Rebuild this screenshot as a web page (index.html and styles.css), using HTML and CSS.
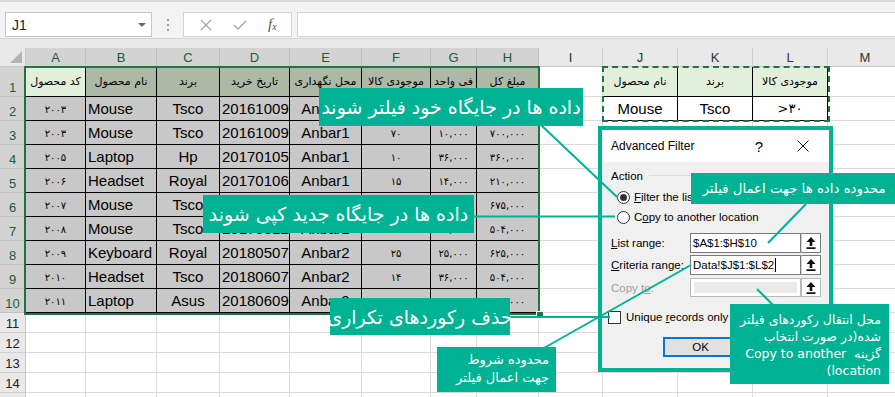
FILE: index.html
```html
<!DOCTYPE html>
<html lang="fa">
<head>
<meta charset="utf-8">
<title>Advanced Filter</title>
<link rel="stylesheet" href="styles.css">
</head>
<body>
<div class="app">
  <div class="fbar">
    <div class="namebox"><span class="nb-text">J1</span><svg class="nb-caret" width="8" height="4" viewBox="0 0 8 4"><path d="M0 0H8L4 4Z" fill="#6b6b6b"/></svg></div>
    <div class="grip"><i></i><i></i><i></i></div>
    <div class="fbtns">
      <svg width="12" height="12" viewBox="0 0 12 12"><path d="M1 1L11 11M11 1L1 11" stroke="#a8a8a8" stroke-width="1.4"/></svg>
      <svg width="14" height="10" viewBox="0 0 14 10"><path d="M1 5L5 9L13 1" stroke="#a8a8a8" stroke-width="1.4" fill="none"/></svg>
      <span class="fx">f<sub>x</sub></span>
    </div>
    <div class="finput"></div>
  </div>
  <div class="band"></div>

  <div class="sheet">
    <div class="corner"><svg width="14" height="14" viewBox="0 0 14 14"><path d="M13 1V13H1Z" fill="#b5b5b5"/></svg></div>
    <div class="ch sel">A</div><div class="ch sel">B</div><div class="ch sel">C</div><div class="ch sel">D</div><div class="ch sel">E</div><div class="ch sel">F</div><div class="ch sel">G</div><div class="ch sel">H</div><div class="ch">I</div><div class="ch">J</div><div class="ch">K</div><div class="ch">L</div><div class="ch">M</div>

    <div class="rh sel">1</div>
    <div class="c th act"><span>کد محصول</span></div>
    <div class="c th"><span>نام محصول</span></div>
    <div class="c th"><span>برند</span></div>
    <div class="c th"><span>تاریخ خرید</span></div>
    <div class="c th"><span>محل نگهداری</span></div>
    <div class="c th"><span>موجودی کالا</span></div>
    <div class="c th"><span>فی واحد</span></div>
    <div class="c th"><span>مبلغ کل</span></div>
    <div class="c"></div>
    <div class="c cr crh"><span>نام محصول</span></div>
    <div class="c cr crh"><span>برند</span></div>
    <div class="c cr crh"><span>موجودی کالا</span></div>
    <div class="c"></div>

    <div class="rh sel">2</div>
    <div class="c d n">۲۰۰۳</div><div class="c d l">Mouse</div><div class="c d m">Tsco</div><div class="c d l">20161009</div><div class="c d m">Anbar1</div><div class="c d n"></div><div class="c d n"></div><div class="c d n"></div>
    <div class="c"></div>
    <div class="c cr m">Mouse</div><div class="c cr m">Tsco</div><div class="c cr m crit" dir="ltr">&gt;۳۰</div>
    <div class="c"></div>

    <div class="rh sel">3</div>
    <div class="c d n">۲۰۰۳</div><div class="c d l">Mouse</div><div class="c d m">Tsco</div><div class="c d l">20161009</div><div class="c d m">Anbar1</div><div class="c d n">۷۰</div><div class="c d n">۱۰,۰۰۰</div><div class="c d n">۷۰۰,۰۰۰</div>
    <div class="c"></div><div class="c"></div><div class="c"></div><div class="c"></div><div class="c"></div>

    <div class="rh sel">4</div>
    <div class="c d n">۲۰۰۵</div><div class="c d l">Laptop</div><div class="c d m">Hp</div><div class="c d l">20170105</div><div class="c d m">Anbar1</div><div class="c d n">۱۰</div><div class="c d n">۳۶,۰۰۰</div><div class="c d n">۳۶۰,۰۰۰</div>
    <div class="c"></div><div class="c"></div><div class="c"></div><div class="c"></div><div class="c"></div>

    <div class="rh sel">5</div>
    <div class="c d n">۲۰۰۶</div><div class="c d l">Headset</div><div class="c d m">Royal</div><div class="c d l">20170106</div><div class="c d m">Anbar1</div><div class="c d n">۱۵</div><div class="c d n">۱۴,۰۰۰</div><div class="c d n">۲۱۰,۰۰۰</div>
    <div class="c"></div><div class="c"></div><div class="c"></div><div class="c"></div><div class="c"></div>

    <div class="rh sel">6</div>
    <div class="c d n">۲۰۰۷</div><div class="c d l">Mouse</div><div class="c d m">Tsco</div><div class="c d l"></div><div class="c d m"></div><div class="c d n"></div><div class="c d n"></div><div class="c d n">۶۷۵,۰۰۰</div>
    <div class="c"></div><div class="c"></div><div class="c"></div><div class="c"></div><div class="c"></div>

    <div class="rh sel">7</div>
    <div class="c d n">۲۰۰۸</div><div class="c d l">Mouse</div><div class="c d m">Tsco</div><div class="c d l">20170312</div><div class="c d m">Anbar1</div><div class="c d n">۱۴</div><div class="c d n">۳۶,۰۰۰</div><div class="c d n">۵۰۴,۰۰۰</div>
    <div class="c"></div><div class="c"></div><div class="c"></div><div class="c"></div><div class="c"></div>

    <div class="rh sel">8</div>
    <div class="c d n">۲۰۰۹</div><div class="c d l">Keyboard</div><div class="c d m">Royal</div><div class="c d l">20180507</div><div class="c d m">Anbar2</div><div class="c d n">۲۵</div><div class="c d n">۲۵,۰۰۰</div><div class="c d n">۶۲۵,۰۰۰</div>
    <div class="c"></div><div class="c"></div><div class="c"></div><div class="c"></div><div class="c"></div>

    <div class="rh sel">9</div>
    <div class="c d n">۲۰۱۰</div><div class="c d l">Headset</div><div class="c d m">Tsco</div><div class="c d l">20180607</div><div class="c d m">Anbar2</div><div class="c d n">۱۴</div><div class="c d n">۳۶,۰۰۰</div><div class="c d n">۵۰۴,۰۰۰</div>
    <div class="c"></div><div class="c"></div><div class="c"></div><div class="c"></div><div class="c"></div>

    <div class="rh sel">10</div>
    <div class="c d n">۲۰۱۱</div><div class="c d l">Laptop</div><div class="c d m">Asus</div><div class="c d l">20180609</div><div class="c d m">Anbar2</div><div class="c d n">۱۶</div><div class="c d n">۲۸,۰۰۰</div><div class="c d n">۴۴۸,۰۰۰</div>
    <div class="c"></div><div class="c"></div><div class="c"></div><div class="c"></div><div class="c"></div>

    <div class="rh">11</div><div class="c"></div><div class="c"></div><div class="c"></div><div class="c"></div><div class="c"></div><div class="c"></div><div class="c"></div><div class="c"></div><div class="c"></div><div class="c"></div><div class="c"></div><div class="c"></div><div class="c"></div>
    <div class="rh">12</div><div class="c"></div><div class="c"></div><div class="c"></div><div class="c"></div><div class="c"></div><div class="c"></div><div class="c"></div><div class="c"></div><div class="c"></div><div class="c"></div><div class="c"></div><div class="c"></div><div class="c"></div>
    <div class="rh">13</div><div class="c"></div><div class="c"></div><div class="c"></div><div class="c"></div><div class="c"></div><div class="c"></div><div class="c"></div><div class="c"></div><div class="c"></div><div class="c"></div><div class="c"></div><div class="c"></div><div class="c"></div>
    <div class="rh">14</div><div class="c"></div><div class="c"></div><div class="c"></div><div class="c"></div><div class="c"></div><div class="c"></div><div class="c"></div><div class="c"></div><div class="c"></div><div class="c"></div><div class="c"></div><div class="c"></div><div class="c"></div>
    <div class="rh"></div><div class="c"></div><div class="c"></div><div class="c"></div><div class="c"></div><div class="c"></div><div class="c"></div><div class="c"></div><div class="c"></div><div class="c"></div><div class="c"></div><div class="c"></div><div class="c"></div><div class="c"></div>
  </div>

  <div class="selframe"><div class="handle"></div></div>
  <div class="ants"></div>

  <div class="dialog">
    <div class="dlg-title">
      <span class="dlg-name">Advanced Filter</span>
      <span class="dlg-help">?</span>
      <svg class="dlg-close" width="12" height="12" viewBox="0 0 12 12"><path d="M0.5 0.5L11.5 11.5M11.5 0.5L0.5 11.5" stroke="#222" stroke-width="1"/></svg>
    </div>
    <div class="dlg-body">
      <div class="grp"><span>Action</span><i class="grp-line"></i></div>
      <div class="opt"><span class="radio on"></span><span><u>F</u>ilter the list, in-place</span></div>
      <div class="opt"><span class="radio"></span><span>C<u>o</u>py to another location</span></div>
      <div class="field f1"><span class="lbl"><u>L</u>ist range:</span><span class="inp">$A$1:$H$10</span><span class="pick"><svg width="10" height="12" viewBox="0 0 10 12"><path d="M5 0L9.5 5H6.3V9H3.7V5H0.5Z M0.5 10.3H9.5V12H0.5Z" fill="#111"/></svg></span></div>
      <div class="field f2"><span class="lbl"><u>C</u>riteria range:</span><span class="inp">Data!$J$1:$L$2<i class="caret"></i></span><span class="pick"><svg width="10" height="12" viewBox="0 0 10 12"><path d="M5 0L9.5 5H6.3V9H3.7V5H0.5Z M0.5 10.3H9.5V12H0.5Z" fill="#111"/></svg></span></div>
      <div class="field f3"><span class="lbl dis">Copy t<u>o</u>:</span><span class="inp off"><i class="off-in"></i></span><span class="pick"><svg width="10" height="12" viewBox="0 0 10 12"><path d="M5 0L9.5 5H6.3V9H3.7V5H0.5Z M0.5 10.3H9.5V12H0.5Z" fill="#111"/></svg></span></div>
      <div class="chk-row"><span class="chk"></span><span>Unique <u>r</u>ecords only</span></div>
      <div class="btn-row"><span class="ok">OK</span><span class="cancel"></span></div>
    </div>
  </div>

  <svg class="wires" width="895" height="397" viewBox="0 0 895 397">
    <g stroke="#00b294" stroke-width="2" fill="none">
      <line x1="541" y1="125" x2="617" y2="197"/>
      <line x1="473" y1="216.5" x2="615" y2="216.5"/>
      <line x1="509" y1="317" x2="610" y2="317"/>
      <line x1="544" y1="348" x2="691" y2="265"/>
      <line x1="768" y1="243" x2="806" y2="204"/>
      <line x1="757" y1="289" x2="773" y2="305"/>
    </g>
  </svg>

  <div class="note n1" dir="rtl">داده ها در جایگاه خود فیلتر شوند</div>
  <div class="note n2" dir="rtl">داده ها در جایگاه جدید کپی شوند</div>
  <div class="note n3" dir="rtl">حذف رکوردهای تکراری</div>
  <div class="note n4" dir="rtl">محدوده شروط<br>جهت اعمال فیلتر</div>
  <div class="note n5" dir="rtl">محدوده داده ها جهت اعمال فیلتر</div>
  <div class="note n6" dir="rtl">محل انتقال رکوردهای فیلتر<br>شده(در صورت انتخاب<br>گزینه&nbsp; Copy to another<br>location)</div>
</div>
</body>
</html>
```
FILE: styles.css
```css
* { box-sizing: border-box; }
body {
  margin: 0;
  background: #fff;
  font-family: "Liberation Sans", Arial, sans-serif;
  overflow: hidden;
}
.app {
  position: relative;
  width: 895px;
  height: 397px;
  overflow: hidden;
}

/* formula bar */
.fbar {
  height: 38px;
  background: #f3f3f3;
  border-top: 2px solid #d9d9d9;
  display: flex;
  align-items: flex-start;
  padding-top: 10px;
}
.namebox {
  margin-left: 5px;
  width: 147px;
  height: 25px;
  background: #fff;
  border: 1px solid #c6c6c6;
  display: flex;
  align-items: center;
  justify-content: space-between;
  padding: 0 5px 0 6px;
  font-size: 14px;
  color: #222;
}
.grip {
  width: 31px;
  height: 25px;
  display: flex;
  flex-direction: column;
  align-items: center;
  justify-content: center;
  gap: 3px;
}
.grip i { display: block; width: 2px; height: 2px; background: #a0a0a0; }
.fbtns {
  width: 109px;
  height: 25px;
  background: #fff;
  border: 1px solid #d4d4d4;
  display: flex;
  align-items: center;
  justify-content: space-around;
  padding: 0 4px 0 6px;
}
.fx {
  font-family: "Liberation Serif", serif;
  font-style: italic;
  font-size: 15px;
  color: #555;
}
.fx sub { font-size: 10px; vertical-align: -1px; }
.finput {
  margin-left: 5px;
  flex: 1;
  height: 25px;
  background: #fff;
  border: 1px solid #d4d4d4;
  border-right: 0;
}
.band {
  height: 10px;
  background: #e9e9e9;
  border-top: 1px solid #d4d4d4;
}

/* sheet grid */
.sheet {
  display: grid;
  grid-template-columns: 26px 60px 71px 63px 70px 72px 69px 46px 62px 64px 75px 75px 75px 75px;
  grid-template-rows: 19px 30px repeat(9, 24px) repeat(5, 20px);
  width: 903px;
}
.corner {
  background: #e9e9e9;
  border-right: 1px solid #c8c8c8;
  border-bottom: 1px solid #c8c8c8;
  display: flex;
  align-items: flex-end;
  justify-content: flex-end;
  padding: 0 2px 2px 0;
}
.ch {
  background: #e9e9e9;
  border-right: 1px solid #cfcfcf;
  border-bottom: 1px solid #c8c8c8;
  display: flex;
  align-items: center;
  justify-content: center;
  font-size: 13px;
  color: #333;
}
.ch.sel { background: #d3d3d3; color: #215a38; border-right-color: #bfbfbf; }
.rh {
  background: #e9e9e9;
  border-right: 1px solid #c8c8c8;
  border-bottom: 1px solid #cfcfcf;
  display: flex;
  align-items: flex-end;
  justify-content: center;
  padding-bottom: 1px;
  font-size: 13px;
  color: #222;
}
.rh.sel { background: #d3d3d3; color: #215a38; border-bottom-color: #bfbfbf; }

.c {
  border-right: 1px solid #dadada;
  border-bottom: 1px solid #dadada;
  display: flex;
  align-items: center;
  overflow: hidden;
  white-space: nowrap;
  font-size: 15px;
  color: #000;
}
.th {
  background: #adb9a5;
  border-color: #000;
  justify-content: center;
  direction: rtl;
  font-family: "DejaVu Sans", sans-serif;
  font-size: 11px;
}
.th span, .crh span { flex: none; }
.th.act { background: #e2efda; }
.d {
  background: #c8c8c8;
  border-color: #000;
}
.l { justify-content: flex-start; padding-left: 2px; }
.m { justify-content: center; }
.n {
  justify-content: center;
  font-family: "DejaVu Sans", sans-serif;
  font-size: 10px;
  padding-top: 2px;
}
.cr { border-color: #000; justify-content: center; }
.crh {
  background: #e2efda;
  font-family: "DejaVu Sans", sans-serif;
  font-size: 11px;
  direction: rtl;
}
.crit { font-family: "DejaVu Sans", sans-serif; font-size: 13px; }

/* selection overlays */
.selframe {
  position: absolute;
  left: 24px;
  top: 66px;
  width: 516px;
  height: 249px;
  border: 2px solid #217346;
}
.handle {
  position: absolute;
  right: -6px;
  bottom: -6px;
  width: 8px;
  height: 8px;
  background: #217346;
  border: 1px solid #fff;
}
.ants {
  position: absolute;
  left: 602px;
  top: 66px;
  width: 228px;
  height: 56px;
  border: 2px dashed #217346;
}

/* dialog */
.dialog {
  position: absolute;
  left: 598px;
  top: 126px;
  width: 235px;
  height: 246px;
  border: 4px solid #00b294;
  background: #f0f0f0;
  font-family: "Liberation Sans", Arial, sans-serif;
  font-size: 11.5px;
  color: #000;
}
.dlg-title {
  height: 32px;
  background: #fff;
  display: flex;
  align-items: center;
  padding-left: 9px;
  font-size: 12px;
}
.dlg-name { flex: 1; }
.dlg-help { font-size: 15px; margin-right: 34px; }
.dlg-close { margin-right: 20px; }
.dlg-body { padding-top: 2px; }
.grp {
  height: 23px;
  display: flex;
  align-items: center;
  padding-left: 9px;
  font-size: 11.5px;
}
.grp-line { flex: 1; height: 1px; background: #dcdcdc; margin: 0 10px 0 6px; }
.opt {
  height: 20px;
  display: flex;
  align-items: center;
  padding-left: 15px;
  gap: 4px;
  font-size: 11.5px;
  white-space: nowrap;
}
.radio {
  width: 13px;
  height: 13px;
  border: 1px solid #333;
  border-radius: 50%;
  background: #fff;
  display: flex;
  align-items: center;
  justify-content: center;
}
.radio.on::after {
  content: "";
  width: 7px;
  height: 7px;
  border-radius: 50%;
  background: #333;
}
.field {
  display: flex;
  align-items: center;
  padding-left: 9px;
  height: 20px;
  font-size: 11.5px;
}
.f1 { margin-top: 6px; }
.f2 { margin-top: 2px; }
.f3 { margin-top: 3px; height: 19px; }
.lbl { width: 79px; white-space: nowrap; }
.lbl.dis { color: #a0a0a0; }
.inp {
  width: 111px;
  height: 100%;
  background: #fff;
  border: 1px solid #7a7a7a;
  display: flex;
  align-items: center;
  padding-left: 2px;
  font-size: 11.5px;
  white-space: nowrap;
}
.caret { display: inline-block; width: 1px; height: 14px; background: #000; margin-left: 1px; }
.inp.off { border-color: #b9b9b9; padding: 3px; }
.off-in { display: block; width: 100%; height: 100%; background: #ebebeb; }
.pick {
  width: 20px;
  height: 100%;
  background: #fff;
  border: 1px solid #7a7a7a;
  border-left: 1px solid #d0d0d0;
  display: flex;
  align-items: center;
  justify-content: center;
}
.f3 .pick { border-color: #b9b9b9; }
.chk-row {
  margin-top: 10px;
  height: 20px;
  display: flex;
  align-items: center;
  padding-left: 6px;
  gap: 5px;
  font-size: 11.5px;
  white-space: nowrap;
}
.chk { width: 13px; height: 13px; border: 1px solid #333; background: #fff; }
.btn-row {
  margin-top: 10px;
  height: 20px;
  display: flex;
  padding-left: 61px;
  gap: 8px;
}
.ok, .cancel {
  width: 75px;
  height: 20px;
  background: #e1e1e1;
  border: 1px solid #adadad;
  display: flex;
  align-items: center;
  justify-content: center;
  font-size: 11.5px;
}
.ok { border: 2px solid #0078d7; }

/* connectors and notes */
.wires { position: absolute; left: 0; top: 0; }
.note {
  position: absolute;
  background: #00b294;
  color: #fff;
  font-family: "DejaVu Sans", sans-serif;
  display: flex;
  align-items: center;
  justify-content: center;
  white-space: nowrap;
}
.n1 { left: 319px; top: 88px; width: 264px; height: 38px; font-size: 19px; }
.n2 { left: 203px; top: 195px; width: 271px; height: 38px; font-size: 19px; }
.n3 { left: 330px; top: 298px; width: 180px; height: 37px; font-size: 19px; }
.n4 {
  left: 437px; top: 347px; width: 119px; height: 45px;
  font-size: 13px; line-height: 18px;
  display: block; text-align: right; padding: 4px 7px 0 0;
}
.n5 { left: 691px; top: 173px; width: 204px; height: 31px; font-size: 13.3px; padding-left: 2px; }
.n6 {
  left: 730px; top: 304px; width: 159px; height: 80px;
  font-size: 12.5px; line-height: 17px;
  display: block; text-align: right; padding: 7px 8px 0 0;
}
```
